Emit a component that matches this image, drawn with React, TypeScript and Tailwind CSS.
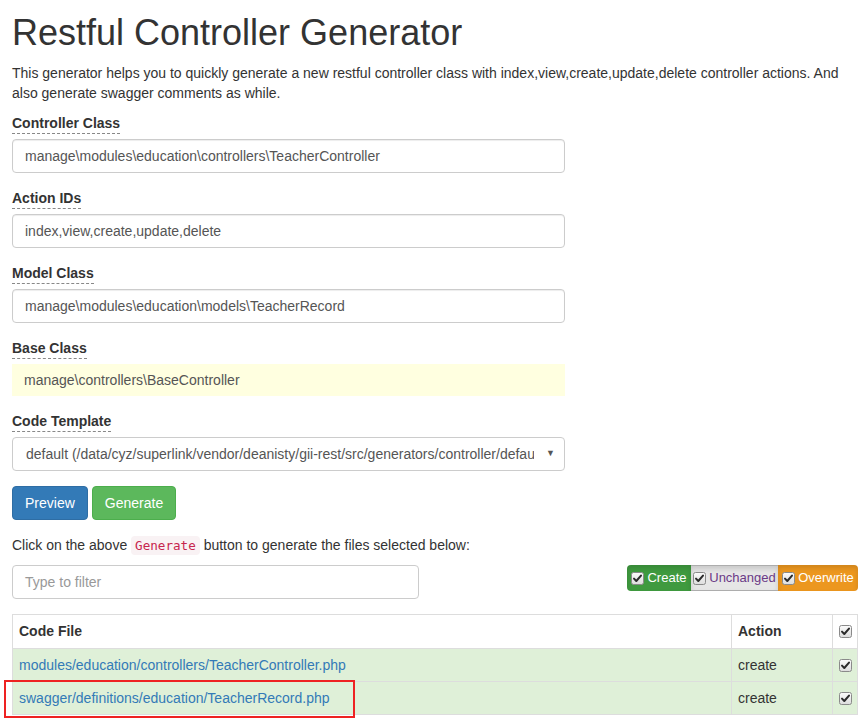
import React from "react";

function Check({ className = "" }: { className?: string }) {
  return (
    <svg width="13" height="13" viewBox="0 0 13 13" className={className}>
      <defs>
        <linearGradient id="cbg" x1="0" y1="0" x2="0" y2="1">
          <stop offset="0" stopColor="#fcfcfc" />
          <stop offset="1" stopColor="#dcdcdc" />
        </linearGradient>
      </defs>
      <rect x="0.5" y="0.5" width="12" height="12" rx="2" fill="url(#cbg)" stroke="#8a8a8a" />
      <path d="M3 6.6 L5.3 9 L10 3.6" fill="none" stroke="#2b2b2b" strokeWidth="2" strokeLinecap="round" strokeLinejoin="round" />
    </svg>
  );
}

function Label({ children }: { children: React.ReactNode }) {
  return (
    <label className="block w-fit font-bold text-[14px] leading-5 border-b border-dashed border-[#888] mb-[5px]">
      {children}
    </label>
  );
}

function Field({ label, value, readonly }: { label: string; value: string; readonly?: boolean }) {
  return (
    <div className="mb-[15px]">
      <Label>{label}</Label>
      {readonly ? (
        <div className="w-[553px] h-[32px] bg-[#ffffe0] px-3 flex items-center text-[14px] text-[#555]">
          {value}
        </div>
      ) : (
        <div className="w-[553px] h-[34px] border border-[#ccc] rounded px-3 flex items-center text-[14px] text-[#555] shadow-[inset_0_1px_1px_rgba(0,0,0,0.075)]">
          {value}
        </div>
      )}
    </div>
  );
}

const files = [
  "modules/education/controllers/TeacherController.php",
  "swagger/definitions/education/TeacherRecord.php",
];

export default function App() {
  return (
    <div
      className="min-h-[728px] bg-white text-[#333] pl-3 pr-[9px]"
      style={{ fontFamily: '"Liberation Sans", Arial, sans-serif' }}
    >
      <h1 className="pt-[13px] text-[36px] leading-10 font-normal">Restful Controller Generator</h1>
      <p className="mt-[10px] text-[14px] leading-5">
        This generator helps you to quickly generate a new restful controller class with index,view,create,update,delete
        controller actions. And also generate swagger comments as while.
      </p>

      <div className="mt-[10px]">
        <Field label="Controller Class" value="manage\modules\education\controllers\TeacherController" />
        <Field label="Action IDs" value="index,view,create,update,delete" />
        <Field label="Model Class" value="manage\modules\education\models\TeacherRecord" />
        <Field label="Base Class" value="manage\controllers\BaseController" readonly />
        <div className="mb-[15px]">
          <Label>Code Template</Label>
          <div className="w-[553px] h-[34px] border border-[#ccc] rounded pl-[13px] pr-[9px] flex items-center text-[14px] text-[#555]">
            <span className="flex-1 overflow-hidden whitespace-nowrap">
              default (/data/cyz/superlink/vendor/deanisty/gii-rest/src/generators/controller/default)
            </span>
            <span className="ml-3 text-[9px] text-[#555]">▼</span>
          </div>
        </div>
      </div>

      <div className="flex gap-1">
        <button className="h-[34px] px-3 rounded text-[14px] text-white bg-[#337ab7] border border-[#2e6da4]">
          Preview
        </button>
        <button className="h-[34px] px-3 rounded text-[14px] text-white bg-[#5cb85c] border border-[#4cae4c]">
          Generate
        </button>
      </div>

      <p className="mt-[15px] text-[14px] leading-5">
        Click on the above{" "}
        <code
          className="px-1 py-[2px] rounded bg-[#f9f2f4] text-[#c7254e] text-[12.6px]"
          style={{ fontFamily: '"DejaVu Sans Mono", "Liberation Mono", monospace' }}
        >
          Generate
        </code>{" "}
        button to generate the files selected below:
      </p>

      <div className="mt-[9px] flex justify-between items-start">
        <div className="w-[407px] h-[34px] border border-[#ccc] rounded px-3 flex items-center text-[14px] text-[#999]">
          Type to filter
        </div>
        <div className="flex h-[26px] text-[13px] rounded overflow-hidden">
          <div className="w-[64px] flex items-center justify-center gap-[3px] bg-[#3f9a3f] text-white shadow-[inset_0_3px_5px_rgba(0,0,0,0.125)]">
            <Check /> Create
          </div>
          <div className="w-[87px] flex items-center justify-center gap-[3px] bg-[#e6e6e6] text-[#6b3a86] border-y border-[#adadad] shadow-[inset_0_3px_5px_rgba(0,0,0,0.125)]">
            <Check /> Unchanged
          </div>
          <div className="w-[80px] flex items-center justify-center gap-[3px] bg-[#ec971f] text-white shadow-[inset_0_3px_5px_rgba(0,0,0,0.125)]">
            <Check /> Overwrite
          </div>
        </div>
      </div>

      <div className="relative mt-[15px]">
        <table className="w-full border-collapse border border-[#ddd] text-[14px]">
          <thead>
            <tr className="h-[34px]">
              <th className="border border-[#ddd] px-[6px] text-left font-bold">Code File</th>
              <th className="w-[101px] border border-[#ddd] px-[6px] text-left font-bold">Action</th>
              <th className="w-[25px] border border-[#ddd] p-0">
                <div className="flex justify-center">
                  <Check />
                </div>
              </th>
            </tr>
          </thead>
          <tbody>
            {files.map((f) => (
              <tr key={f} className="h-[33px] bg-[#dff0d8]">
                <td className="border border-[#ddd] px-[6px] text-[#337ab7]">{f}</td>
                <td className="border border-[#ddd] px-[6px]">create</td>
                <td className="border border-[#ddd] p-0">
                  <div className="flex justify-center">
                    <Check />
                  </div>
                </td>
              </tr>
            ))}
          </tbody>
        </table>
        <div className="absolute left-[-8px] top-[66px] w-[351px] h-[38px] border-2 border-[#ee2222]" />
      </div>
    </div>
  );
}
